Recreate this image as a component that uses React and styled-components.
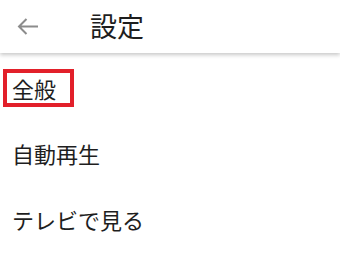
import styled, { createGlobalStyle } from 'styled-components';

const GlobalStyle = createGlobalStyle`
  body {
    margin: 0;
    background: #fff;
    font-family: "Noto Sans CJK JP", "Noto Sans", sans-serif;
    color: #212121;
  }
`;

const Page = styled.div`
  width: 340px;
  height: 254px;
  overflow: hidden;
  background: #fff;
`;

const Header = styled.header`
  position: relative;
  z-index: 1;
  height: 53px;
  display: flex;
  align-items: center;
  background: #fff;
  box-shadow: 0 2px 4px rgba(0, 0, 0, 0.22);
`;

const BackButton = styled.div`
  width: 90px;
  height: 53px;
  display: flex;
  align-items: center;
  padding: 0 0 0 17px;
  box-sizing: border-box;
  color: #8c8c8c;
`;

const Title = styled.h1`
  margin: 0 0 2px;
  font-size: 27px;
  font-weight: 400;
  line-height: 1;
  color: #1e1e1e;
`;

const List = styled.ul`
  list-style: none;
  margin: 0;
  padding: 1px 0 0;
`;

const Item = styled.li`
  height: 66px;
  display: flex;
  align-items: center;
  padding-left: 12px;
  font-size: 22px;
  line-height: 1;
  color: #1e1e1e;
`;

const Label = styled.span`
  ${(p) =>
    p.$highlight &&
    `
    margin: 2px 0 0 -9px;
    padding: 4px 14px 4px 5px;
    border: 4px solid #e2202a;
  `}
`;

const ArrowIcon = () => (
  <svg width="21" height="21" viewBox="0 0 21 21" fill="none">
    <path d="M21 10.5H2M9.5 3l-7.5 7.5 7.5 7.5" stroke="currentColor" strokeWidth="2" />
  </svg>
);

const items = [
  { label: '全般', highlight: true },
  { label: '自動再生' },
  { label: 'テレビで見る' },
];

export default function App() {
  return (
    <Page>
      <GlobalStyle />
      <Header>
        <BackButton>
          <ArrowIcon />
        </BackButton>
        <Title>設定</Title>
      </Header>
      <List>
        {items.map((item) => (
          <Item key={item.label}>
            <Label $highlight={item.highlight}>{item.label}</Label>
          </Item>
        ))}
      </List>
    </Page>
  );
}
